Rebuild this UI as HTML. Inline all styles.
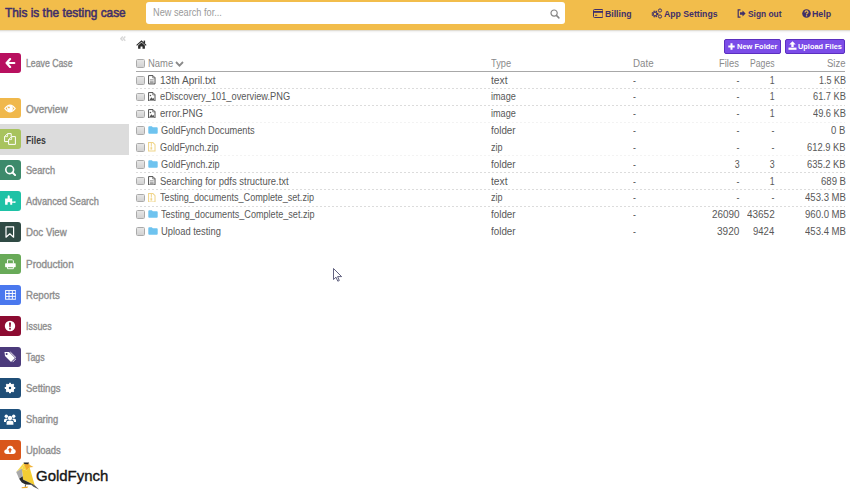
<!DOCTYPE html>
<html><head><meta charset="utf-8">
<style>
*{margin:0;padding:0;box-sizing:border-box}
html,body{width:850px;height:494px;overflow:hidden;background:#fff}
body{position:relative;font-family:"Liberation Sans",sans-serif}
.t{position:absolute;white-space:pre;line-height:1}
.a{position:absolute}
#hdr{left:0;top:0;width:850px;height:30px;background:#f2bd4b}
#hdrsh{left:0;top:30px;width:850px;height:2.5px;background:linear-gradient(#d8d2c4,rgba(235,235,235,0.6) 50%,rgba(255,255,255,0))}
#search{left:146px;top:2px;width:419px;height:22px;background:#fff;border-radius:3px}
.ib{position:absolute;left:0;width:21px;height:20px;border-radius:0 3px 3px 0}
#hl{left:0;top:124px;width:129px;height:31px;background:#dcdcdc}
.cb{position:absolute;left:136px;width:8.5px;height:8.5px;border:1px solid #aaaaaa;border-radius:1.5px;background:linear-gradient(#e6e6e6,#d2d2d2)}
.dl{position:absolute;left:136px;width:709px;height:1px;background:repeating-linear-gradient(90deg,#dcdcdc 0 2px,transparent 2px 4px)}
.btn{position:absolute;top:39px;height:15px;background:#7b4ce8;border:1px solid #5b2fc0;border-radius:2px}
</style></head><body>
<div id="hdr" class="a"></div>
<div id="hdrsh" class="a"></div>
<div id="search" class="a"></div>
<!-- search icon -->
<svg class="a" style="left:549.5px;top:8.5px" width="10" height="10" viewBox="0 0 10 10"><circle cx="4.1" cy="4.1" r="3.1" fill="none" stroke="#858585" stroke-width="1.2"/><path d="M6.4 6.4 L8.9 8.9" stroke="#858585" stroke-width="1.5" stroke-linecap="round"/></svg>
<!-- billing icon -->
<svg class="a" style="left:592.5px;top:9px" width="10.5" height="9" viewBox="0 0 10.5 9"><rect x="0.5" y="0.5" width="9.5" height="8" rx="1" fill="none" stroke="#3f2f6a" stroke-width="1"/><rect x="0.5" y="2" width="9.5" height="1.8" fill="#3f2f6a"/><rect x="2" y="5.8" width="2.2" height="0.9" fill="#3f2f6a"/></svg>
<!-- app settings icon -->
<svg class="a" style="left:651px;top:8px" width="12" height="11" viewBox="0 0 12 11"><circle cx="4" cy="6" r="2.6" fill="none" stroke="#3f2f6a" stroke-width="1.8" stroke-dasharray="1.2 0.9"/><circle cx="4" cy="6" r="1.9" fill="none" stroke="#3f2f6a" stroke-width="1"/><circle cx="9" cy="2.5" r="1.6" fill="none" stroke="#3f2f6a" stroke-width="1"/><circle cx="9" cy="8.5" r="1.6" fill="none" stroke="#3f2f6a" stroke-width="1"/></svg>
<!-- sign out icon -->
<svg class="a" style="left:737px;top:9px" width="9" height="9" viewBox="0 0 9 9"><path d="M3.5 0.8 H1.2 V8.2 H3.5" fill="none" stroke="#3f2f6a" stroke-width="1.2"/><path d="M3 3.3 H5.5 V1.5 L8.6 4.5 L5.5 7.5 V5.7 H3 Z" fill="#3f2f6a"/></svg>
<!-- help icon -->
<svg class="a" style="left:802px;top:9px" width="9" height="9" viewBox="0 0 9 9"><circle cx="4.5" cy="4.5" r="4.3" fill="#3f2f6a"/><path d="M3 3.4 Q3 1.9 4.5 1.9 Q6 1.9 6 3.2 Q6 4 5 4.5 Q4.6 4.8 4.6 5.4" fill="none" stroke="#f2bd4b" stroke-width="1.2"/><rect x="3.9" y="6.2" width="1.3" height="1.2" fill="#f2bd4b"/></svg>

<!-- sidebar -->
<svg class="a" style="left:119.5px;top:35.5px" width="6" height="6" viewBox="0 0 6 6"><path d="M2.8 0.6 L0.8 2.7 L2.8 4.8 M5.3 0.6 L3.3 2.7 L5.3 4.8" fill="none" stroke="#d8d8d8" stroke-width="1.4"/></svg>
<div id="hl" class="a"></div>
<div class="ib" style="top:53px;background:#b8105f"></div>
<svg class="a" style="left:5px;top:58px" width="11" height="10" viewBox="0 0 11 10"><path d="M5.1 1.1 L1.6 5 L5.1 8.9 M2 5 H9.3" fill="none" stroke="#fff" stroke-width="2.2" stroke-linecap="round" stroke-linejoin="round"/></svg>
<div class="ib" style="top:98.0px;background:#f0b84b"></div>
<svg class="a" style="left:4px;top:102.0px" width="12" height="12" viewBox="0 0 12 12"><path d="M0.1 6.5 Q6 -1.6 11.9 6.5 Q6 14.6 0.1 6.5 Z" fill="#fff"/><path d="M1.5 6.5 Q6 1.2 10.5 6.5 Q6 11.8 1.5 6.5 Z" fill="#f0b84b"/><circle cx="6" cy="6.5" r="2.9" fill="#fff"/><circle cx="4.9" cy="5.4" r="0.9" fill="#f0b84b"/></svg>
<div class="ib" style="top:129.1px;background:#a8c35e"></div>
<svg class="a" style="left:4px;top:133.1px" width="12" height="12" viewBox="0 0 12 12"><path d="M0.6 3.6 L3.6 0.6 H7.2 V3.6 M0.6 3.6 V8.6 H4.6" fill="none" stroke="#fff" stroke-width="1"/><path d="M0.6 3.6 H3.6 V0.6" fill="none" stroke="#fff" stroke-width="0.8"/><path d="M7.6 3.6 H11.4 V11.4 H4.6 V6.6 Z" fill="#a8c35e" stroke="#fff" stroke-width="1" stroke-linejoin="round"/><path d="M4.6 6.6 H7.6 V3.6" fill="none" stroke="#fff" stroke-width="0.8"/></svg>
<div class="ib" style="top:160.2px;background:#3d8a6b"></div>
<svg class="a" style="left:4px;top:164.2px" width="12" height="12" viewBox="0 0 12 12"><circle cx="5.7" cy="5.7" r="3.9" fill="none" stroke="#fff" stroke-width="1.6"/><path d="M8.5 8.5 L11.1 11.1" stroke="#fff" stroke-width="2" stroke-linecap="round"/></svg>
<div class="ib" style="top:191.3px;background:#1ec2a6"></div>
<svg class="a" style="left:4px;top:195.3px" width="12" height="12" viewBox="0 0 12 12"><path d="M1.1 3.5 H3.6 V2 Q3.4 0.2 4.7 0.2 Q6 0.2 5.8 2 V3.5 H8.2 V6.4 H10 Q11.8 6 11.8 7.1 Q11.8 8.2 10 7.8 H8.2 V9.8 H6.2 V7.6 Q4.9 6.6 3.6 7.6 V9.8 H1.1 Z" fill="#fff"/></svg>
<div class="ib" style="top:222.4px;background:#2f4a44"></div>
<svg class="a" style="left:4px;top:226.4px" width="12" height="12" viewBox="0 0 12 12"><path d="M2 0.8 H9.6 V11.2 L5.8 7.8 L2 11.2 Z" fill="none" stroke="#fff" stroke-width="1.2" stroke-linejoin="round"/></svg>
<div class="ib" style="top:253.5px;background:#68aa58"></div>
<svg class="a" style="left:4px;top:257.5px" width="12" height="12" viewBox="0 0 12 12"><path d="M3.5 5.4 V1.8 H8.4 L9.4 2.8 V5.4" fill="none" stroke="#fff" stroke-width="0.9"/><rect x="1.1" y="5.3" width="10.6" height="3.9" rx="0.6" fill="#fff"/><path d="M3.5 9 V10.7 H9.4 V9" fill="none" stroke="#fff" stroke-width="0.9"/></svg>
<div class="ib" style="top:284.6px;background:#4a78ee"></div>
<svg class="a" style="left:4px;top:288.6px" width="12" height="12" viewBox="0 0 12 12"><rect x="1.1" y="1.1" width="10.8" height="9.6" fill="#fff"/><rect x="2.10" y="2.05" width="2.45" height="1.9" fill="#4a78ee"/><rect x="2.10" y="4.95" width="2.45" height="1.9" fill="#4a78ee"/><rect x="2.10" y="7.85" width="2.45" height="1.9" fill="#4a78ee"/><rect x="5.45" y="2.05" width="2.45" height="1.9" fill="#4a78ee"/><rect x="5.45" y="4.95" width="2.45" height="1.9" fill="#4a78ee"/><rect x="5.45" y="7.85" width="2.45" height="1.9" fill="#4a78ee"/><rect x="8.80" y="2.05" width="2.45" height="1.9" fill="#4a78ee"/><rect x="8.80" y="4.95" width="2.45" height="1.9" fill="#4a78ee"/><rect x="8.80" y="7.85" width="2.45" height="1.9" fill="#4a78ee"/></svg>
<div class="ib" style="top:315.7px;background:#8c0b31"></div>
<svg class="a" style="left:4px;top:319.7px" width="12" height="12" viewBox="0 0 12 12"><circle cx="6" cy="6" r="5.2" fill="#fff"/><path d="M5 2.6 H7 L6.6 7.2 H5.4 Z" fill="#8c0b31"/><rect x="5.2" y="8" width="1.6" height="1.6" fill="#8c0b31"/></svg>
<div class="ib" style="top:346.8px;background:#4b3a7b"></div>
<svg class="a" style="left:4px;top:350.8px" width="12" height="12" viewBox="0 0 12 12"><path d="M0.5 1 H5 L11 7 L7 11 L1 5 Z" fill="#fff"/><circle cx="2.6" cy="3" r="1" fill="#4b3a7b"/><path d="M6.3 1 L12.5 7.2 L8.6 11.1" fill="none" stroke="#fff" stroke-width="0.9"/></svg>
<div class="ib" style="top:377.9px;background:#1f4e77"></div>
<svg class="a" style="left:4px;top:381.9px" width="12" height="12" viewBox="0 0 12 12"><circle cx="6" cy="6" r="2.75" fill="none" stroke="#fff" stroke-width="3.1"/><rect x="5" y="0.75" width="2" height="2.6" rx="0.4" fill="#fff" transform="rotate(0 6 6)"/><rect x="5" y="0.75" width="2" height="2.6" rx="0.4" fill="#fff" transform="rotate(45 6 6)"/><rect x="5" y="0.75" width="2" height="2.6" rx="0.4" fill="#fff" transform="rotate(90 6 6)"/><rect x="5" y="0.75" width="2" height="2.6" rx="0.4" fill="#fff" transform="rotate(135 6 6)"/><rect x="5" y="0.75" width="2" height="2.6" rx="0.4" fill="#fff" transform="rotate(180 6 6)"/><rect x="5" y="0.75" width="2" height="2.6" rx="0.4" fill="#fff" transform="rotate(225 6 6)"/><rect x="5" y="0.75" width="2" height="2.6" rx="0.4" fill="#fff" transform="rotate(270 6 6)"/><rect x="5" y="0.75" width="2" height="2.6" rx="0.4" fill="#fff" transform="rotate(315 6 6)"/></svg>
<div class="ib" style="top:409.0px;background:#1f517d"></div>
<svg class="a" style="left:4px;top:413.0px" width="12" height="12" viewBox="0 0 12 12"><circle cx="6" cy="5" r="2.2" fill="#fff"/><circle cx="2.3" cy="3.2" r="1.7" fill="#fff"/><circle cx="9.7" cy="3.2" r="1.7" fill="#fff"/><path d="M2.6 11.8 V9.4 Q2.6 7.4 6 7.4 Q9.4 7.4 9.4 9.4 V11.8 Z" fill="#fff"/><path d="M0 9 V7 Q0 5.4 2.3 5.4 Q3.6 5.4 4 6.2 Q2.2 6.8 1.9 9 Z M12 9 V7 Q12 5.4 9.7 5.4 Q8.4 5.4 8 6.2 Q9.8 6.8 10.1 9 Z" fill="#fff"/></svg>
<div class="ib" style="top:440.1px;background:#d9561b"></div>
<svg class="a" style="left:4px;top:444.1px" width="12" height="12" viewBox="0 0 12 12"><path d="M3 10 Q0.2 10 0.2 7.6 Q0.2 5.4 2.6 5.2 Q3.2 1.8 6.2 1.8 Q9 1.8 9.6 5 Q11.8 5.3 11.8 7.6 Q11.8 10 9.4 10 Z" fill="#fff"/><path d="M6 3.8 L3.8 6.2 H5.2 V8.6 H6.8 V6.2 H8.2 Z" fill="#d9561b"/></svg>
<!-- table -->
<svg class="a" style="left:136px;top:40px" width="11" height="9" viewBox="0 0 11 9"><path d="M0.6 5.3 L5.5 1 L10.2 5.3" fill="none" stroke="#2b2b2b" stroke-width="1.1"/><rect x="7.6" y="0.6" width="1.5" height="2.8" fill="#2b2b2b"/><path d="M2.1 5.4 L5.5 2.4 L8.9 5.4 V8.8 H6.5 V6.6 H4.5 V8.8 H2.1 Z" fill="#2b2b2b"/></svg>
<div class="btn" style="left:724px;width:57px"></div>
<div class="btn" style="left:785px;width:60px"></div>
<svg class="a" style="left:728px;top:42.5px" width="7" height="7" viewBox="0 0 7 7"><path d="M3.5 0.3 V6.7 M0.3 3.5 H6.7" stroke="#fff" stroke-width="2"/></svg>
<svg class="a" style="left:788px;top:41px" width="9" height="9" viewBox="0 0 9 9"><path d="M4.5 0.3 L1.3 3.6 H3.3 V6 H5.7 V3.6 H7.7 Z" fill="#fff"/><rect x="0.5" y="6.6" width="8" height="2.2" fill="#fff"/></svg>
<div class="a" style="left:136px;top:71px;width:709px;height:1px;background:#a8a8a8"></div>
<div class="cb" style="top:59px"></div>
<svg class="a" style="left:175px;top:61px" width="9" height="6" viewBox="0 0 9 6"><path d="M1 1 L4.5 4.6 L8 1" fill="none" stroke="#8a8a8a" stroke-width="1.8"/></svg>
<div class="cb" style="top:76.0px"></div>
<div class="dl" style="top:88.0px;opacity:1"></div>
<svg class="a" style="left:148px;top:75.0px" width="7.6" height="9.5" viewBox="0 0 8 10"><path d="M0.6 0.6 H5.2 L7.4 2.8 V9.4 H0.6 Z" fill="none" stroke="#4a4a4a" stroke-width="1"/><path d="M5 0.6 V3 H7.4" fill="none" stroke="#555" stroke-width="0.8"/><path d="M2 5 H6 M2 6.6 H6 M2 8 H6" stroke="#666" stroke-width="0.7"/></svg>
<div class="cb" style="top:92.8px"></div>
<div class="dl" style="top:104.8px;opacity:1"></div>
<svg class="a" style="left:148px;top:91.8px" width="7.6" height="9.5" viewBox="0 0 8 10"><path d="M0.6 0.6 H5.2 L7.4 2.8 V9.4 H0.6 Z" fill="none" stroke="#4a4a4a" stroke-width="1"/><path d="M5 0.6 V3 H7.4" fill="none" stroke="#555" stroke-width="0.8"/><path d="M1.5 8.5 L3.5 5.5 L4.8 7 L5.8 6 L6.6 8.5 Z" fill="#555"/><circle cx="2.6" cy="3.8" r="0.8" fill="#555"/></svg>
<div class="cb" style="top:109.6px"></div>
<div class="dl" style="top:121.6px;opacity:0.35"></div>
<svg class="a" style="left:148px;top:108.6px" width="7.6" height="9.5" viewBox="0 0 8 10"><path d="M0.6 0.6 H5.2 L7.4 2.8 V9.4 H0.6 Z" fill="none" stroke="#4a4a4a" stroke-width="1"/><path d="M5 0.6 V3 H7.4" fill="none" stroke="#555" stroke-width="0.8"/><path d="M1.5 8.5 L3.5 5.5 L4.8 7 L5.8 6 L6.6 8.5 Z" fill="#555"/><circle cx="2.6" cy="3.8" r="0.8" fill="#555"/></svg>
<div class="cb" style="top:126.4px"></div>
<div class="dl" style="top:138.4px;opacity:0"></div>
<svg class="a" style="left:147.5px;top:126.2px" width="10" height="8" viewBox="0 0 10 8"><path d="M0.3 1.2 Q0.3 0.3 1.2 0.3 H3.8 L4.8 1.3 H8.8 Q9.7 1.3 9.7 2.2 V6.8 Q9.7 7.7 8.8 7.7 H1.2 Q0.3 7.7 0.3 6.8 Z" fill="#6ec3ef"/></svg>
<div class="cb" style="top:143.2px"></div>
<div class="dl" style="top:155.2px;opacity:0.35"></div>
<svg class="a" style="left:148px;top:142.2px" width="7.6" height="9.5" viewBox="0 0 8 10"><path d="M0.6 0.6 H5.2 L7.4 2.8 V9.4 H0.6 Z" fill="none" stroke="#f0d58a" stroke-width="1.1"/><path d="M3.5 0.6 V5 M3.1 1.8 H3.9 M3.1 3.2 H3.9" stroke="#f0d58a" stroke-width="0.9"/><rect x="2.6" y="5.4" width="1.8" height="2.6" fill="#f0d58a"/></svg>
<div class="cb" style="top:160.0px"></div>
<div class="dl" style="top:172.0px;opacity:1"></div>
<svg class="a" style="left:147.5px;top:159.8px" width="10" height="8" viewBox="0 0 10 8"><path d="M0.3 1.2 Q0.3 0.3 1.2 0.3 H3.8 L4.8 1.3 H8.8 Q9.7 1.3 9.7 2.2 V6.8 Q9.7 7.7 8.8 7.7 H1.2 Q0.3 7.7 0.3 6.8 Z" fill="#6ec3ef"/></svg>
<div class="cb" style="top:176.8px"></div>
<div class="dl" style="top:188.8px;opacity:1"></div>
<svg class="a" style="left:148px;top:175.8px" width="7.6" height="9.5" viewBox="0 0 8 10"><path d="M0.6 0.6 H5.2 L7.4 2.8 V9.4 H0.6 Z" fill="none" stroke="#4a4a4a" stroke-width="1"/><path d="M5 0.6 V3 H7.4" fill="none" stroke="#555" stroke-width="0.8"/><path d="M2 5 H6 M2 6.6 H6 M2 8 H6" stroke="#666" stroke-width="0.7"/></svg>
<div class="cb" style="top:193.6px"></div>
<div class="dl" style="top:205.6px;opacity:1"></div>
<svg class="a" style="left:148px;top:192.6px" width="7.6" height="9.5" viewBox="0 0 8 10"><path d="M0.6 0.6 H5.2 L7.4 2.8 V9.4 H0.6 Z" fill="none" stroke="#f0d58a" stroke-width="1.1"/><path d="M3.5 0.6 V5 M3.1 1.8 H3.9 M3.1 3.2 H3.9" stroke="#f0d58a" stroke-width="0.9"/><rect x="2.6" y="5.4" width="1.8" height="2.6" fill="#f0d58a"/></svg>
<div class="cb" style="top:210.4px"></div>
<div class="dl" style="top:222.4px;opacity:0"></div>
<svg class="a" style="left:147.5px;top:210.2px" width="10" height="8" viewBox="0 0 10 8"><path d="M0.3 1.2 Q0.3 0.3 1.2 0.3 H3.8 L4.8 1.3 H8.8 Q9.7 1.3 9.7 2.2 V6.8 Q9.7 7.7 8.8 7.7 H1.2 Q0.3 7.7 0.3 6.8 Z" fill="#6ec3ef"/></svg>
<div class="cb" style="top:227.2px"></div>
<svg class="a" style="left:147.5px;top:227.0px" width="10" height="8" viewBox="0 0 10 8"><path d="M0.3 1.2 Q0.3 0.3 1.2 0.3 H3.8 L4.8 1.3 H8.8 Q9.7 1.3 9.7 2.2 V6.8 Q9.7 7.7 8.8 7.7 H1.2 Q0.3 7.7 0.3 6.8 Z" fill="#6ec3ef"/></svg>
<!-- cursor -->
<svg class="a" style="left:332.5px;top:268px" width="10" height="15" viewBox="0 0 10 15"><path d="M0.5 0.5 V11.5 L3 9.2 L4.8 13.2 L6.3 12.5 L4.6 8.6 L8.6 8.6 Z" fill="#fff" stroke="#3a3a60" stroke-width="0.8"/></svg>
<!-- logo -->
<svg class="a" style="left:12px;top:460px" width="30" height="32" viewBox="0 0 30 32">
<path d="M11.7 3 L4.2 12 L9.8 8.4 L12.5 4 Z" fill="#f5d84a"/>
<path d="M9.8 8.4 L14.6 10.5 L17.6 7.2 L22.7 25.3 L11 19.5 L10.7 16.2 Z" fill="#f4cd33"/>
<path d="M12.5 4 L9.8 8.4 L14.6 10.5 L17.6 7.2 Z" fill="#f6d640"/>
<path d="M12 3.6 L17.3 3.6 L17.6 7.2 L14.6 10.5 Z" fill="#efa92a"/>
<path d="M11.5 2.6 L17.2 2.6 L16 4.2 L12.4 4.1 Z" fill="#2b2b2b"/>
<path d="M16.5 4.3 L21.5 7.1 L17 7.4 Z" fill="#f1b43a"/>
<path d="M4.2 12 L9.8 8.4 L10.7 16.2 L7.1 18.8 Z" fill="#a9a9a9"/>
<path d="M7.1 18.8 L10.7 16.2 L11 19.5 L22.7 25.3 L19.5 24.8 L13.5 24.6 L9.8 22.5 Z" fill="#2a2a2a"/>
<path d="M18.8 24.6 L22.7 25.3 L27 29.6 L21.5 26.8 Z" fill="#555"/>
<path d="M13 24.5 L14 24.5 L13.6 27 L12.8 27 Z" fill="#555"/>
<path d="M9.7 27.2 L16.3 26.6 L15.2 28.1 L9.7 28.3 Z" fill="#efa92a"/>
</svg>
<div class="t" style="left:4.64px;top:6px;font-size:13px;font-weight:400;color:#3f2f6a;transform:scaleX(0.9129);transform-origin:0 0;-webkit-text-stroke:0.55px #3f2f6a">This is the testing case</div>
<div class="t" style="left:153.22px;top:8px;font-size:10px;font-weight:400;color:#9a9a9a;transform:scaleX(0.9176);transform-origin:0 0">New search for...</div>
<div class="t" style="left:604.74px;top:9px;font-size:9.6px;font-weight:700;color:#3f2f6a;transform:scaleX(0.9048);transform-origin:0 0">Billing</div>
<div class="t" style="left:663.74px;top:9px;font-size:9.6px;font-weight:700;color:#3f2f6a;transform:scaleX(0.9045);transform-origin:0 0">App Settings</div>
<div class="t" style="left:747.75px;top:9px;font-size:9.6px;font-weight:700;color:#3f2f6a;transform:scaleX(0.8730);transform-origin:0 0">Sign out</div>
<div class="t" style="left:812.24px;top:9px;font-size:9.6px;font-weight:700;color:#3f2f6a;transform:scaleX(0.9149);transform-origin:0 0">Help</div>
<div class="t" style="left:25.74px;top:59px;font-size:10.2px;font-weight:400;color:#8e8e8e;transform:scaleX(0.8556);transform-origin:0 0;-webkit-text-stroke:0.35px #8e8e8e">Leave Case</div>
<div class="t" style="left:25.50px;top:105px;font-size:10.2px;font-weight:400;color:#8e8e8e;transform:scaleX(0.9795);transform-origin:0 0;-webkit-text-stroke:0.35px #8e8e8e">Overview</div>
<div class="t" style="left:25.54px;top:136px;font-size:10.2px;font-weight:700;color:#3a3a3a;transform:scaleX(0.8582);transform-origin:0 0">Files</div>
<div class="t" style="left:25.52px;top:166px;font-size:10.2px;font-weight:400;color:#8e8e8e;transform:scaleX(0.8999);transform-origin:0 0;-webkit-text-stroke:0.35px #8e8e8e">Search</div>
<div class="t" style="left:25.52px;top:197px;font-size:10.2px;font-weight:400;color:#8e8e8e;transform:scaleX(0.9059);transform-origin:0 0;-webkit-text-stroke:0.35px #8e8e8e">Advanced Search</div>
<div class="t" style="left:25.51px;top:228px;font-size:10.2px;font-weight:400;color:#8e8e8e;transform:scaleX(0.9492);transform-origin:0 0;-webkit-text-stroke:0.35px #8e8e8e">Doc View</div>
<div class="t" style="left:25.50px;top:260px;font-size:10.2px;font-weight:400;color:#8e8e8e;transform:scaleX(0.9791);transform-origin:0 0;-webkit-text-stroke:0.35px #8e8e8e">Production</div>
<div class="t" style="left:25.51px;top:291px;font-size:10.2px;font-weight:400;color:#8e8e8e;transform:scaleX(0.9498);transform-origin:0 0;-webkit-text-stroke:0.35px #8e8e8e">Reports</div>
<div class="t" style="left:25.53px;top:322px;font-size:10.2px;font-weight:400;color:#8e8e8e;transform:scaleX(0.8738);transform-origin:0 0;-webkit-text-stroke:0.35px #8e8e8e">Issues</div>
<div class="t" style="left:25.54px;top:353px;font-size:10.2px;font-weight:400;color:#8e8e8e;transform:scaleX(0.8652);transform-origin:0 0;-webkit-text-stroke:0.35px #8e8e8e">Tags</div>
<div class="t" style="left:25.51px;top:384px;font-size:10.2px;font-weight:400;color:#8e8e8e;transform:scaleX(0.9365);transform-origin:0 0;-webkit-text-stroke:0.35px #8e8e8e">Settings</div>
<div class="t" style="left:25.52px;top:415px;font-size:10.2px;font-weight:400;color:#8e8e8e;transform:scaleX(0.9156);transform-origin:0 0;-webkit-text-stroke:0.35px #8e8e8e">Sharing</div>
<div class="t" style="left:25.51px;top:446px;font-size:10.2px;font-weight:400;color:#8e8e8e;transform:scaleX(0.9326);transform-origin:0 0;-webkit-text-stroke:0.35px #8e8e8e">Uploads</div>
<div class="t" style="left:36.05px;top:469px;font-size:14.5px;font-weight:400;color:#151515;transform:scaleX(1.0324);transform-origin:0 0;-webkit-text-stroke:0.35px #151515">GoldFynch</div>
<div class="t" style="left:148.12px;top:59px;font-size:10px;font-weight:400;color:#8a8a8a;transform:scaleX(0.9430);transform-origin:0 0">Name</div>
<div class="t" style="left:490.82px;top:59px;font-size:10px;font-weight:400;color:#8a8a8a;transform:scaleX(0.9247);transform-origin:0 0">Type</div>
<div class="t" style="left:632.71px;top:59px;font-size:10px;font-weight:400;color:#8a8a8a;transform:scaleX(0.9744);transform-origin:0 0">Date</div>
<div class="t" style="left:719.32px;top:59px;font-size:10px;font-weight:400;color:#8a8a8a;transform:scaleX(0.9452);transform-origin:0 0">Files</div>
<div class="t" style="left:749.74px;top:59px;font-size:10px;font-weight:400;color:#8a8a8a;transform:scaleX(0.8646);transform-origin:0 0">Pages</div>
<div class="t" style="left:826.71px;top:59px;font-size:10px;font-weight:400;color:#8a8a8a;transform:scaleX(0.9547);transform-origin:0 0">Size</div>
<div class="t" style="left:736.57px;top:43px;font-size:8px;font-weight:700;color:#ffffff;transform:scaleX(0.9380);transform-origin:0 0">New Folder</div>
<div class="t" style="left:797.78px;top:43px;font-size:8px;font-weight:700;color:#ffffff;transform:scaleX(0.9239);transform-origin:0 0">Upload Files</div>
<div class="t" style="left:159.60px;top:76px;font-size:10px;font-weight:400;color:#585858;transform:scaleX(1.0104);transform-origin:0 0">13th April.txt</div>
<div class="t" style="left:490.69px;top:76px;font-size:10px;font-weight:400;color:#585858;transform:scaleX(1.0242);transform-origin:0 0">text</div>
<div class="t" style="left:632.70px;top:76px;font-size:10px;font-weight:400;color:#585858;transform:scaleX(0.875);transform-origin:0 0">-</div>
<div class="t" style="right:110.70px;top:76px;font-size:10px;font-weight:400;color:#585858;transform:scaleX(0.875);transform-origin:100% 0">-</div>
<div class="t" style="right:75.70px;top:76px;font-size:10px;font-weight:400;color:#585858;transform:scaleX(0.875);transform-origin:100% 0">1</div>
<div class="t" style="left:818.53px;top:76px;font-size:10px;font-weight:400;color:#585858;transform:scaleX(0.9004);transform-origin:0 0">1.5 KB</div>
<div class="t" style="left:159.62px;top:92px;font-size:10px;font-weight:400;color:#585858;transform:scaleX(0.9255);transform-origin:0 0">eDiscovery_101_overview.PNG</div>
<div class="t" style="left:490.73px;top:92px;font-size:10px;font-weight:400;color:#585858;transform:scaleX(0.9118);transform-origin:0 0">image</div>
<div class="t" style="left:632.70px;top:92px;font-size:10px;font-weight:400;color:#585858;transform:scaleX(0.875);transform-origin:0 0">-</div>
<div class="t" style="right:110.70px;top:92px;font-size:10px;font-weight:400;color:#585858;transform:scaleX(0.875);transform-origin:100% 0">-</div>
<div class="t" style="right:75.70px;top:92px;font-size:10px;font-weight:400;color:#585858;transform:scaleX(0.875);transform-origin:100% 0">1</div>
<div class="t" style="left:812.62px;top:92px;font-size:10px;font-weight:400;color:#585858;transform:scaleX(0.9259);transform-origin:0 0">61.7 KB</div>
<div class="t" style="left:159.61px;top:109px;font-size:10px;font-weight:400;color:#585858;transform:scaleX(0.9524);transform-origin:0 0">error.PNG</div>
<div class="t" style="left:490.73px;top:109px;font-size:10px;font-weight:400;color:#585858;transform:scaleX(0.9118);transform-origin:0 0">image</div>
<div class="t" style="left:632.70px;top:109px;font-size:10px;font-weight:400;color:#585858;transform:scaleX(0.875);transform-origin:0 0">-</div>
<div class="t" style="right:110.70px;top:109px;font-size:10px;font-weight:400;color:#585858;transform:scaleX(0.875);transform-origin:100% 0">-</div>
<div class="t" style="right:75.70px;top:109px;font-size:10px;font-weight:400;color:#585858;transform:scaleX(0.875);transform-origin:100% 0">1</div>
<div class="t" style="left:812.62px;top:109px;font-size:10px;font-weight:400;color:#585858;transform:scaleX(0.9259);transform-origin:0 0">49.6 KB</div>
<div class="t" style="left:160.62px;top:126px;font-size:10px;font-weight:400;color:#585858;transform:scaleX(0.9207);transform-origin:0 0">GoldFynch Documents</div>
<div class="t" style="left:490.71px;top:126px;font-size:10px;font-weight:400;color:#585858;transform:scaleX(0.9830);transform-origin:0 0">folder</div>
<div class="t" style="left:632.70px;top:126px;font-size:10px;font-weight:400;color:#585858;transform:scaleX(0.875);transform-origin:0 0">-</div>
<div class="t" style="right:110.70px;top:126px;font-size:10px;font-weight:400;color:#585858;transform:scaleX(0.875);transform-origin:100% 0">-</div>
<div class="t" style="right:75.70px;top:126px;font-size:10px;font-weight:400;color:#585858;transform:scaleX(0.875);transform-origin:100% 0">-</div>
<div class="t" style="left:831.31px;top:126px;font-size:10px;font-weight:400;color:#585858;transform:scaleX(0.9504);transform-origin:0 0">0 B</div>
<div class="t" style="left:159.62px;top:143px;font-size:10px;font-weight:400;color:#585858;transform:scaleX(0.9175);transform-origin:0 0">GoldFynch.zip</div>
<div class="t" style="left:490.73px;top:143px;font-size:10px;font-weight:400;color:#585858;transform:scaleX(0.9019);transform-origin:0 0">zip</div>
<div class="t" style="left:632.70px;top:143px;font-size:10px;font-weight:400;color:#585858;transform:scaleX(0.875);transform-origin:0 0">-</div>
<div class="t" style="right:110.70px;top:143px;font-size:10px;font-weight:400;color:#585858;transform:scaleX(0.875);transform-origin:100% 0">-</div>
<div class="t" style="right:75.70px;top:143px;font-size:10px;font-weight:400;color:#585858;transform:scaleX(0.875);transform-origin:100% 0">-</div>
<div class="t" style="left:807.02px;top:143px;font-size:10px;font-weight:400;color:#585858;transform:scaleX(0.9370);transform-origin:0 0">612.9 KB</div>
<div class="t" style="left:160.62px;top:160px;font-size:10px;font-weight:400;color:#585858;transform:scaleX(0.9175);transform-origin:0 0">GoldFynch.zip</div>
<div class="t" style="left:490.71px;top:160px;font-size:10px;font-weight:400;color:#585858;transform:scaleX(0.9830);transform-origin:0 0">folder</div>
<div class="t" style="left:632.70px;top:160px;font-size:10px;font-weight:400;color:#585858;transform:scaleX(0.875);transform-origin:0 0">-</div>
<div class="t" style="right:110.70px;top:160px;font-size:10px;font-weight:400;color:#585858;transform:scaleX(0.875);transform-origin:100% 0">3</div>
<div class="t" style="right:75.70px;top:160px;font-size:10px;font-weight:400;color:#585858;transform:scaleX(0.875);transform-origin:100% 0">3</div>
<div class="t" style="left:807.02px;top:160px;font-size:10px;font-weight:400;color:#585858;transform:scaleX(0.9370);transform-origin:0 0">635.2 KB</div>
<div class="t" style="left:159.62px;top:177px;font-size:10px;font-weight:400;color:#585858;transform:scaleX(0.9449);transform-origin:0 0">Searching for pdfs structure.txt</div>
<div class="t" style="left:490.69px;top:177px;font-size:10px;font-weight:400;color:#585858;transform:scaleX(1.0242);transform-origin:0 0">text</div>
<div class="t" style="left:632.70px;top:177px;font-size:10px;font-weight:400;color:#585858;transform:scaleX(0.875);transform-origin:0 0">-</div>
<div class="t" style="right:110.70px;top:177px;font-size:10px;font-weight:400;color:#585858;transform:scaleX(0.875);transform-origin:100% 0">-</div>
<div class="t" style="right:75.70px;top:177px;font-size:10px;font-weight:400;color:#585858;transform:scaleX(0.875);transform-origin:100% 0">1</div>
<div class="t" style="left:820.61px;top:177px;font-size:10px;font-weight:400;color:#585858;transform:scaleX(0.9553);transform-origin:0 0">689 B</div>
<div class="t" style="left:159.63px;top:193px;font-size:10px;font-weight:400;color:#585858;transform:scaleX(0.9116);transform-origin:0 0">Testing_documents_Complete_set.zip</div>
<div class="t" style="left:490.73px;top:193px;font-size:10px;font-weight:400;color:#585858;transform:scaleX(0.9019);transform-origin:0 0">zip</div>
<div class="t" style="left:632.70px;top:193px;font-size:10px;font-weight:400;color:#585858;transform:scaleX(0.875);transform-origin:0 0">-</div>
<div class="t" style="right:110.70px;top:193px;font-size:10px;font-weight:400;color:#585858;transform:scaleX(0.875);transform-origin:100% 0">-</div>
<div class="t" style="right:75.70px;top:193px;font-size:10px;font-weight:400;color:#585858;transform:scaleX(0.875);transform-origin:100% 0">-</div>
<div class="t" style="left:804.61px;top:193px;font-size:10px;font-weight:400;color:#585858;transform:scaleX(0.9571);transform-origin:0 0">453.3 MB</div>
<div class="t" style="left:160.63px;top:210px;font-size:10px;font-weight:400;color:#585858;transform:scaleX(0.9086);transform-origin:0 0">Testing_documents_Complete_set.zip</div>
<div class="t" style="left:490.71px;top:210px;font-size:10px;font-weight:400;color:#585858;transform:scaleX(0.9830);transform-origin:0 0">folder</div>
<div class="t" style="left:632.70px;top:210px;font-size:10px;font-weight:400;color:#585858;transform:scaleX(0.875);transform-origin:0 0">-</div>
<div class="t" style="left:711.70px;top:210px;font-size:10px;font-weight:400;color:#585858;transform:scaleX(0.9922);transform-origin:0 0">26090</div>
<div class="t" style="left:746.60px;top:210px;font-size:10px;font-weight:400;color:#585858;transform:scaleX(0.9959);transform-origin:0 0">43652</div>
<div class="t" style="left:804.61px;top:210px;font-size:10px;font-weight:400;color:#585858;transform:scaleX(0.9571);transform-origin:0 0">960.0 MB</div>
<div class="t" style="left:160.62px;top:227px;font-size:10px;font-weight:400;color:#585858;transform:scaleX(0.9363);transform-origin:0 0">Upload testing</div>
<div class="t" style="left:490.71px;top:227px;font-size:10px;font-weight:400;color:#585858;transform:scaleX(0.9830);transform-origin:0 0">folder</div>
<div class="t" style="left:632.70px;top:227px;font-size:10px;font-weight:400;color:#585858;transform:scaleX(0.875);transform-origin:0 0">-</div>
<div class="t" style="left:717.00px;top:227px;font-size:10px;font-weight:400;color:#585858;transform:scaleX(1.0023);transform-origin:0 0">3920</div>
<div class="t" style="left:753.11px;top:227px;font-size:10px;font-weight:400;color:#585858;transform:scaleX(0.9515);transform-origin:0 0">9424</div>
<div class="t" style="left:804.61px;top:227px;font-size:10px;font-weight:400;color:#585858;transform:scaleX(0.9571);transform-origin:0 0">453.4 MB</div>
</body></html>
